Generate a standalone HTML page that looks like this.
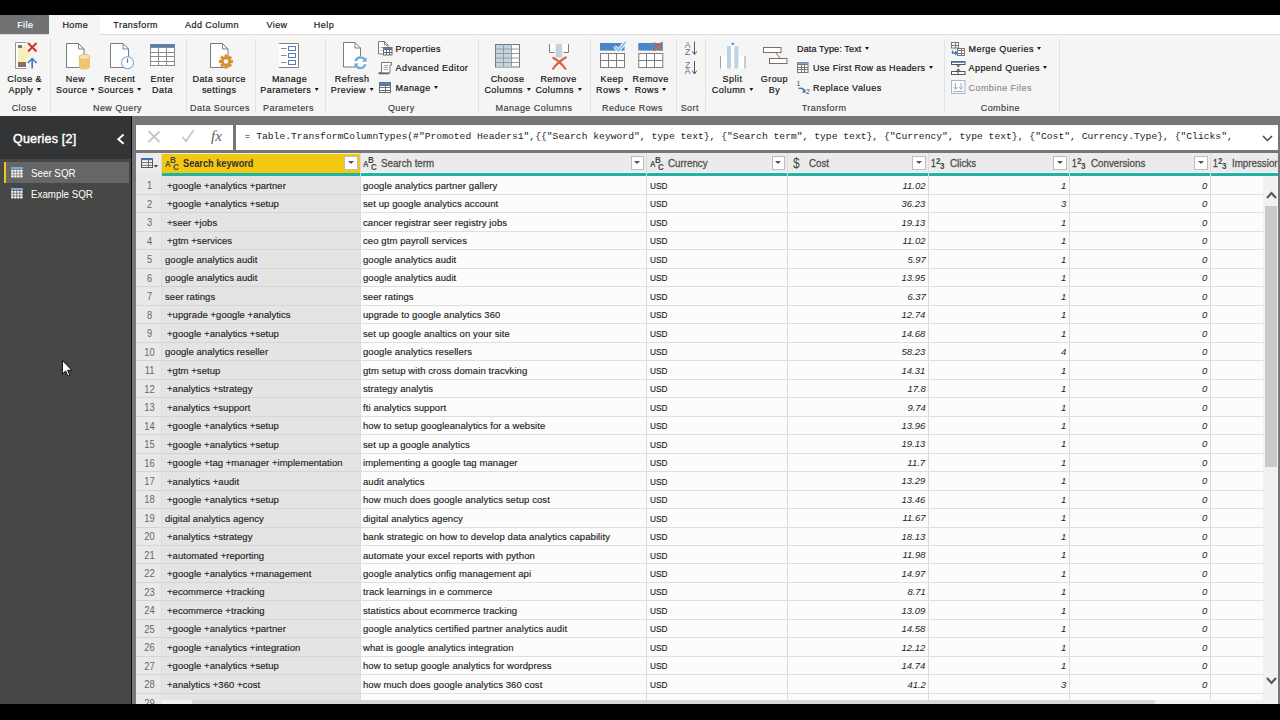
<!DOCTYPE html>
<html lang="en"><head><meta charset="utf-8"><title>Power Query Editor</title>
<style>
html,body{margin:0;padding:0;background:#000;}
body{width:1280px;height:720px;overflow:hidden;position:relative;font-family:"Liberation Sans",sans-serif;}
#app{position:absolute;left:0;top:0;width:1280px;height:720px;overflow:hidden;background:#767676;}
.abs{position:absolute;display:block;}
.t{position:absolute;white-space:pre;transform-origin:0 50%;line-height:15px;}
#topbar{position:absolute;left:0;top:0;width:1280px;height:15px;background:#000;}
#botbar{position:absolute;left:0;top:704px;width:1280px;height:16px;background:#000;}
/* left panel */
#left{position:absolute;left:0;top:116px;width:131px;height:588px;background:#474746;border-right:1px solid #0a0a0a;}
#left .t,#left .abs{margin-top:-116px;}
#lefthead{position:absolute;left:0;top:0;width:131px;height:42.5px;background:#333435;}
.qh{color:#fff;font-weight:normal;font-size:12.5px;letter-spacing:.2px;line-height:20px;-webkit-text-stroke:.45px #fff;}
.qsel{position:absolute;left:4px;top:46px;width:125px;height:21px;background:#666;}
.qbar{position:absolute;left:4px;top:46px;width:1.5px;height:21px;background:#f2c811;}
.qi{color:#fff;font-size:11.5px;line-height:16px;transform:scaleX(.85);}
/* formula */
#fx1{position:absolute;left:136px;top:125px;width:97px;height:25px;background:#fff;}
#fx2{position:absolute;left:236px;top:125px;width:1042px;height:25px;background:#fff;}
.fxi{font-family:"Liberation Serif",serif;font-style:italic;font-size:15px;color:#606060;line-height:20px;}
.formula{font-family:"Liberation Mono",monospace;font-size:9.7px;color:#222;line-height:16px;}
/* grid */
#grid{position:absolute;left:0;top:0;width:1280px;height:704px;}
#grid:before{content:"";position:absolute;left:136px;top:153px;width:1142px;height:551px;background:#fcfcfc;}
#hdr{position:absolute;left:136px;top:153px;width:1142px;height:19px;background:#ebebeb;}
#hsel{position:absolute;left:162px;top:153.8px;width:198.4px;height:18.9px;background:#f2c811;}
#teal{position:absolute;left:162px;top:172.5px;width:1116px;height:3.9px;background:#1eb3a4;}
#numcol{position:absolute;left:136px;top:172px;width:26px;height:532px;background:#e9e9e9;}
#selcol{position:absolute;left:162px;top:176px;width:198.4px;height:524px;background:#e4e4e5;}
.vl{position:absolute;top:153px;width:1px;height:547px;background:#dbdbdb;}
.hl{position:absolute;left:136px;width:1127px;height:1px;background:linear-gradient(to right,#d5d5d6 0,#d5d5d6 224px,#dfdfdf 224px,#dfdfdf 100%);}
.rn{left:137px;width:25px;text-align:center;color:#666;font-size:10.4px;transform-origin:50% 50%;transform:scaleX(.9);margin-top:.6px;}
.c{color:#1e1e1e;font-size:9.5px;letter-spacing:.05px;margin-top:.2px;-webkit-text-stroke:.15px #1e1e1e;}
.n{color:#1e1e1e;font-size:9.7px;font-style:italic;transform-origin:100% 50%;transform:scaleX(.98);}
.ty{color:#444;font-size:9px;font-weight:bold;line-height:15px;transform:scaleX(.85);}
.tys{font-size:9.5px;}
.dol{font-size:14px;line-height:18px;font-weight:normal;}
.hb{color:#333;font-weight:bold;font-size:10.5px;transform:scaleX(.875);}
.hn{color:#505050;font-size:10.5px;transform:scaleX(.93);-webkit-text-stroke:.3px #505050;margin-top:.4px;}
.dd{position:absolute;top:156.2px;width:13.5px;height:13.4px;background:#fff;border:1px solid #bdbdbd;box-sizing:border-box;}
.dd i{position:absolute;left:2.5px;top:4px;width:0;height:0;border-left:3px solid transparent;border-right:3px solid transparent;border-top:3.5px solid #555;}
#vsb{position:absolute;left:1263px;top:176px;width:15px;height:524px;background:#f1f1f1;}
#vthumb{position:absolute;left:1.5px;top:30px;width:12.5px;height:261px;background:#c9c9c9;}
#hsb{position:absolute;left:162px;top:700px;width:1116px;height:4px;background:#f1f1f1;}
#hthumb{position:absolute;left:30px;top:0;width:963px;height:4px;background:#d8d8d8;}
/* ribbon */
#tabs{position:absolute;left:0;top:15px;width:1280px;height:19px;background:#fff;border-bottom:1px solid #dadada;box-sizing:content-box;}
#tabs .t{margin-top:-15px;}
#tfile{position:absolute;left:0;top:0;width:48.7px;height:18.7px;background:#717273;}
#thome{position:absolute;left:49px;top:0;width:51px;height:20px;background:#f5f5f5;}
#ribbon{position:absolute;left:0;top:0;width:1280px;height:116px;}
#ribbon:before{content:"";position:absolute;left:0;top:35px;width:1280px;height:81px;background:#f5f5f5;}
.ct{transform:translateX(-50%);}
.tab{font-size:9px;letter-spacing:.45px;color:#1c1c1c;-webkit-text-stroke:.2px #1c1c1c;line-height:15px;}
.tw{color:#fff;-webkit-text-stroke:.2px #fff;}
.sep{position:absolute;top:39px;width:1px;height:74px;background:#e2e2e2;}
.gl{font-size:9px;letter-spacing:.45px;color:#3a3a3a;-webkit-text-stroke:.15px #3a3a3a;line-height:15px;}
.rb{font-size:9px;letter-spacing:.45px;color:#161616;-webkit-text-stroke:.2px #161616;line-height:15px;}
.sq{letter-spacing:.3px;}
.dis{color:#8a8a8a;-webkit-text-stroke:.15px #8a8a8a;}
.ar{display:inline-block;width:0;height:0;border-left:2.9px solid transparent;border-right:2.9px solid transparent;border-top:3.3px solid #1c1c1c;vertical-align:1.6px;margin-left:.6px;}
.sl{font-family:"Liberation Sans",sans-serif;font-size:8.6px;text-anchor:middle;}
.rv{font-family:"Liberation Sans",sans-serif;font-size:7px;fill:#444;}
.dt{letter-spacing:.15px;}
.usd{letter-spacing:0;transform:scaleX(.87);}
.k{letter-spacing:.05px;}
.s{letter-spacing:.09px;}
.t1{font-size:10px;font-weight:normal;-webkit-text-stroke:.3px #444;}

</style></head>
<body>
<div id="app">
<div id="tabs"><div id="tfile"></div><div id="thome"></div>
<span class="t ct tab tw" style="left:25.3px;top:17.7px">File</span><span class="t ct tab " style="left:75.3px;top:17.7px">Home</span><span class="t ct tab " style="left:135.7px;top:17.7px">Transform</span><span class="t ct tab " style="left:212px;top:17.7px">Add Column</span><span class="t ct tab " style="left:277px;top:17.7px">View</span><span class="t ct tab " style="left:324px;top:17.7px">Help</span>
</div>
<div id="ribbon">
<div class="sep" style="left:50px"></div><div class="sep" style="left:186px"></div><div class="sep" style="left:255px"></div><div class="sep" style="left:325px"></div><div class="sep" style="left:478px"></div><div class="sep" style="left:590px"></div><div class="sep" style="left:676px"></div><div class="sep" style="left:705px"></div><div class="sep" style="left:944px"></div><div class="sep" style="left:1059px"></div>
<span class="t ct gl" style="left:24.3px;top:100.5px">Close</span><span class="t ct gl" style="left:117.5px;top:100.5px">New Query</span><span class="t ct gl" style="left:220px;top:100.5px">Data Sources</span><span class="t ct gl" style="left:288.5px;top:100.5px">Parameters</span><span class="t ct gl" style="left:401.3px;top:100.5px">Query</span><span class="t ct gl" style="left:534px;top:100.5px">Manage Columns</span><span class="t ct gl" style="left:632.5px;top:100.5px">Reduce Rows</span><span class="t ct gl" style="left:689.8px;top:100.5px">Sort</span><span class="t ct gl" style="left:824px;top:100.5px">Transform</span><span class="t ct gl" style="left:1000.3px;top:100.5px">Combine</span>
<span class="t ct rb" style="left:24.7px;top:71.7px">Close &amp;</span><span class="t ct rb" style="left:24.7px;top:82.7px">Apply <i class="ar"></i></span>
<span class="t ct rb" style="left:75.5px;top:71.7px">New</span><span class="t ct rb" style="left:75.5px;top:82.7px">Source <i class="ar"></i></span>
<span class="t ct rb" style="left:119.7px;top:71.7px">Recent</span><span class="t ct rb" style="left:119.7px;top:82.7px">Sources <i class="ar"></i></span>
<span class="t ct rb" style="left:162.5px;top:71.7px">Enter</span><span class="t ct rb" style="left:162.5px;top:82.7px">Data</span>
<span class="t ct rb" style="left:219.2px;top:71.7px">Data source</span><span class="t ct rb" style="left:219.2px;top:82.7px">settings</span>
<span class="t ct rb" style="left:289.5px;top:71.7px">Manage</span><span class="t ct rb" style="left:289.5px;top:82.7px">Parameters <i class="ar"></i></span>
<span class="t ct rb" style="left:352.2px;top:71.7px">Refresh</span><span class="t ct rb" style="left:352.2px;top:82.7px">Preview <i class="ar"></i></span>
<span class="t ct rb" style="left:507.5px;top:71.7px">Choose</span><span class="t ct rb" style="left:507.5px;top:82.7px">Columns <i class="ar"></i></span>
<span class="t ct rb" style="left:558.5px;top:71.7px">Remove</span><span class="t ct rb" style="left:558.5px;top:82.7px">Columns <i class="ar"></i></span>
<span class="t ct rb" style="left:612px;top:71.7px">Keep</span><span class="t ct rb" style="left:612px;top:82.7px">Rows <i class="ar"></i></span>
<span class="t ct rb" style="left:650.6px;top:71.7px">Remove</span><span class="t ct rb" style="left:650.6px;top:82.7px">Rows <i class="ar"></i></span>
<span class="t ct rb" style="left:732.5px;top:71.7px">Split</span><span class="t ct rb" style="left:732.5px;top:82.7px">Column <i class="ar"></i></span>
<span class="t ct rb" style="left:774.4px;top:71.7px">Group</span><span class="t ct rb" style="left:774.4px;top:82.7px">By</span>
<span class="t rb " style="left:395.5px;top:42.05px">Properties</span>
<span class="t rb " style="left:395.5px;top:60.8px">Advanced Editor</span>
<span class="t rb " style="left:395.5px;top:80.8px">Manage <i class="ar"></i></span>
<span class="t rb dt" style="left:797px;top:42.05px">Data Type: Text <i class="ar"></i></span>
<span class="t rb sq" style="left:813px;top:60.8px">Use First Row as Headers <i class="ar"></i></span>
<span class="t rb " style="left:813px;top:80.8px">Replace Values</span>
<span class="t rb " style="left:968.5px;top:42.05px">Merge Queries <i class="ar"></i></span>
<span class="t rb " style="left:968.5px;top:60.8px">Append Queries <i class="ar"></i></span>
<span class="t rb dis" style="left:968.5px;top:80.8px">Combine Files</span>
<svg class="abs" style="left:14px;top:41px" width="25" height="29" viewBox="14 41 25 29"><rect x="15.5" y="42.5" width="11" height="26" fill="#fff"/><path d="M26.5 42.5H15.5v26h11" fill="none" stroke="#8d9baa"/><path d="M18 45.5h8.3v6.5l6.4 2.6l-6.4 3.6v4H18z" fill="#f6f0b6"/><rect x="18" y="45" width="4" height="3" fill="#8a6f60"/><rect x="18" y="62" width="8" height="5" fill="#8a6f60"/><path d="M28 43l8.5 8.5M36.5 43l-8.5 8.5" stroke="#cf3431" stroke-width="2.1" fill="none"/><path d="M32.2 68.5V59M27.8 63L32.2 58.6l4.4 4.4" stroke="#447db8" stroke-width="1.7" fill="none"/></svg>
<svg class="abs" style="left:64px;top:41px" width="28" height="30" viewBox="64 41 28 30"><path d="M66.5 43.5h12.0l5.5 5.5v18.5h-17.5z" fill="#fff" stroke="#7c7c7c"/><path d="M78.5 43.5v5.5h5.5" fill="none" stroke="#7c7c7c"/><path d="M79 57v10c0 3.4 11 3.4 11 0V57z" fill="#ecc674"/><ellipse cx="84.5" cy="57" rx="5.5" ry="2.6" fill="#f7e2ad" stroke="#e3b559" stroke-width=".8"/></svg>
<svg class="abs" style="left:108px;top:41px" width="28" height="30" viewBox="108 41 28 30"><path d="M110.5 43.5h12.5l5.5 5.5v18.5h-18z" fill="#fff" stroke="#7c7c7c"/><path d="M123.0 43.5v5.5h5.5" fill="none" stroke="#7c7c7c"/><circle cx="127.5" cy="62.7" r="6" fill="#fff" stroke="#7aabda" stroke-width="1.1"/><path d="M127.5 58.5v4.5" stroke="#777" stroke-width="1.1" fill="none"/></svg>
<svg class="abs" style="left:149px;top:43px" width="28" height="24" viewBox="149 43 28 24"><rect x="150.5" y="44.5" width="24" height="21" fill="#fff" stroke="#8a8a8a"/><rect x="150.5" y="44.5" width="24" height="3.2" fill="#4a80bd"/><path d="M158.5 47.7v17.8M166.5 47.7v17.8M150.5 47.5h24M150.5 52.5h24M150.5 56.5h24M150.5 61.5h24" stroke="#8a8a8a" fill="none"/></svg>
<svg class="abs" style="left:208px;top:41px" width="28" height="30" viewBox="208 41 28 30"><path d="M210.5 43.5h12.0l5.5 5.5v18.5h-17.5z" fill="#fff" stroke="#7c7c7c"/><path d="M222.5 43.5v5.5h5.5" fill="none" stroke="#7c7c7c"/><rect x="224.4" y="54.5" width="3.2" height="14" fill="#d98f32" transform="rotate(0 226 61.5)"/><rect x="224.4" y="54.5" width="3.2" height="14" fill="#d98f32" transform="rotate(45 226 61.5)"/><rect x="224.4" y="54.5" width="3.2" height="14" fill="#d98f32" transform="rotate(90 226 61.5)"/><rect x="224.4" y="54.5" width="3.2" height="14" fill="#d98f32" transform="rotate(135 226 61.5)"/><circle cx="226" cy="61.5" r="4.8" fill="#d98f32"/><circle cx="226" cy="61.5" r="2.2" fill="#fff"/></svg>
<svg class="abs" style="left:277px;top:41px" width="24" height="29" viewBox="277 41 24 29"><path d="M279 43.5h19.5v24H279" fill="#fff" stroke="#8c7d74"/><path d="M281 48.5h5.5" stroke="#8a8a8a" fill="none"/><rect x="288.5" y="46.5" width="7" height="4" fill="#fff" stroke="#4f81bd"/><path d="M281 55.5h5.5" stroke="#8a8a8a" fill="none"/><rect x="288.5" y="53.5" width="7" height="4" fill="#fff" stroke="#4f81bd"/><path d="M281 62.5h5.5" stroke="#8a8a8a" fill="none"/><rect x="288.5" y="60.5" width="7" height="4" fill="#fff" stroke="#4f81bd"/></svg>
<svg class="abs" style="left:341px;top:40px" width="29" height="31" viewBox="341 40 29 31"><path d="M343.5 42.5h11.5l5.5 5.5v19.0h-17z" fill="#fff" stroke="#7c7c7c"/><path d="M355.0 42.5v5.5h5.5" fill="none" stroke="#7c7c7c"/><circle cx="360.5" cy="62.7" r="6.8" fill="#fff"/><path d="M355.6 61.2a5.2 5.2 0 0 1 9.3-1.6" fill="none" stroke="#6aaad9" stroke-width="2.2"/><path d="M366.6 57.2v4.6h-4.6z" fill="#6aaad9"/><path d="M365.4 64.2a5.2 5.2 0 0 1-9.3 1.6" fill="none" stroke="#6aaad9" stroke-width="2.2"/><path d="M354.4 68.2v-4.6h4.6z" fill="#6aaad9"/></svg>
<svg class="abs" style="left:377px;top:40px" width="17" height="17" viewBox="377 40 17 17"><path d="M378.5 41.5h6l3.5 3.5v9h-9.5z" fill="#fff" stroke="#7c7c7c"/><path d="M384.5 41.5v3.5h3.5" fill="none" stroke="#7c7c7c"/><path d="M380.5 47.5h3M380.5 50.5h2" stroke="#9ab" fill="none"/><rect x="383.5" y="47.5" width="8.5" height="7.5" fill="#fff" stroke="#6a6a6a"/><rect x="383.5" y="47.5" width="8.5" height="2.4" fill="#4a80bd"/><path d="M386.5 49.9v5.1M389.5 49.9v5.1M383.5 49.5h8.5M383.5 52.5h8.5" stroke="#6a6a6a" fill="none"/></svg>
<svg class="abs" style="left:377px;top:61px" width="17" height="15" viewBox="377 61 17 15"><path d="M381.5 62.5h10v2.5h-1.5v8h-10.5v-0.5h2z" fill="#fff" stroke="#777"/><path d="M378.5 73.5h10.5" stroke="#666" stroke-width="1.6" fill="none"/><path d="M383.5 65.5h4.5M383.5 67.5h4.5M383.5 69.5h4.5" stroke="#888" stroke-width=".8" fill="none"/></svg>
<svg class="abs" style="left:378px;top:81px" width="14" height="13" viewBox="378 81 14 13"><rect x="379.5" y="82.5" width="11" height="10" fill="#fff" stroke="#6e6e6e"/><rect x="379.5" y="82.5" width="11" height="2.5" fill="#4a80bd"/><path d="M385.5 85.0v7.5M379.5 85.5h11M379.5 87.5h11M379.5 90.5h11" stroke="#6e6e6e" fill="none"/></svg>
<svg class="abs" style="left:494px;top:43px" width="28" height="26" viewBox="494 43 28 26"><rect x="495.5" y="44.5" width="24" height="22.5" fill="#fff" stroke="#777"/><rect x="496" y="45" width="16" height="21.5" fill="#c2d5e2"/><path d="M503.5 44.5v22.5M511.5 44.5v22.5M495.5 49.0h24M495.5 53.5h24M495.5 58.0h24M495.5 62.5h24" stroke="#9a9a9a" fill="none"/></svg>
<svg class="abs" style="left:547px;top:43px" width="24" height="29" viewBox="547 43 24 29"><rect x="549.5" y="44" width="19" height="8.5" fill="#fff"/><path d="M549.5 44v8.5h5M568.5 44v8.5h-5" fill="none" stroke="#7d7d7d"/><rect x="555.6" y="44" width="6.6" height="13.5" fill="#c2d4df"/><path d="M552.5 57.5c5 2.5 9.5 6.5 13.5 12M566.5 57c-5.5 3-10.5 7.5-14 12.5" stroke="#d9623c" stroke-width="2" fill="none"/></svg>
<svg class="abs" style="left:599px;top:40px" width="29" height="29" viewBox="599 40 29 29"><rect x="600" y="43" width="24.5" height="7.6" fill="#4a86c8"/><rect x="600.5" y="53.5" width="24" height="14" fill="#fff" stroke="#7d7d7d"/><path d="M608.5 53.5v14M616.5 53.5v14M600.5 60.5h24" stroke="#7d7d7d" fill="none"/><path d="M614.5 46.5l4 4l7-8.5" stroke="#fff" stroke-width="3.6" fill="none"/><path d="M614.5 46.5l4 4l7-8.5" stroke="#8fbbdf" stroke-width="1.9" fill="none"/></svg>
<svg class="abs" style="left:637px;top:40px" width="29" height="29" viewBox="637 40 29 29"><rect x="638.3" y="43" width="24.5" height="7.6" fill="#4a86c8"/><rect x="638.8" y="53.5" width="24" height="14" fill="#fff" stroke="#7d7d7d"/><path d="M646.5 53.5v14M654.5 53.5v14M638.8 60.5h24" stroke="#7d7d7d" fill="none"/><path d="M654 42.5l8.5 8M662.5 42l-8.5 9" stroke="#d9623c" stroke-width="1.7" fill="none"/></svg>
<svg class="abs" style="left:683px;top:40px" width="17" height="36" viewBox="683 40 17 36"><text x="687.6" y="48" class="sl" fill="#4a7ebb">A</text><text x="687.6" y="54.9" class="sl" fill="#6f6390">Z</text><path d="M694.5 41.5v13M692.2 51.2l2.3 3.3l2.3-3.3" stroke="#5a5a5a" stroke-width="1" fill="none"/><text x="687.6" y="67.5" class="sl" fill="#4a7ebb">Z</text><text x="687.6" y="74.4" class="sl" fill="#6f6390">A</text><path d="M694.5 61.0v13M692.2 70.7l2.3 3.3l2.3-3.3" stroke="#5a5a5a" stroke-width="1" fill="none"/></svg>
<svg class="abs" style="left:718px;top:41px" width="30" height="29" viewBox="718 41 30 29"><rect x="720.5" y="56" width="24.5" height="12.5" fill="#fff"/><path d="M720.5 56v12.5M745 56v12.5" stroke="#a0a0a0" fill="none"/><rect x="727" y="46" width="11.4" height="22.5" fill="#fff"/><rect x="727" y="46" width="4" height="22.5" fill="#b9d4e6"/><rect x="734.4" y="46" width="4" height="22.5" fill="#b9d4e6"/><path d="M731 43h3.6l-1.8 2.4z" fill="#4a86c8"/></svg>
<svg class="abs" style="left:761px;top:45px" width="29" height="21" viewBox="761 45 29 21"><path d="M775.5 52.5l5 6" stroke="#7d6f66" fill="none"/><rect x="763.5" y="47.5" width="17.5" height="5" fill="#fff" stroke="#7d6f66"/><rect x="769.5" y="58.5" width="17.5" height="5" fill="#fff" stroke="#7d6f66"/></svg>
<svg class="abs" style="left:796px;top:61px" width="14" height="13" viewBox="796 61 14 13"><rect x="797.5" y="62.5" width="10.5" height="10" fill="#fff" stroke="#777"/><rect x="797.5" y="62.5" width="10.5" height="2.2" fill="#7aa7d6"/><path d="M801.5 64.7v7.8M804.5 64.7v7.8M797.5 64.5h10.5M797.5 67.5h10.5M797.5 69.5h10.5" stroke="#777" fill="none"/></svg>
<svg class="abs" style="left:796px;top:79px" width="16" height="16" viewBox="796 79 16 16"><text x="796.5" y="85.8" class="rv">1</text><text x="806" y="94" class="rv">2</text><path d="M798.5 88.5c2.5-.6 5 .2 6 2.4" stroke="#3f78b5" stroke-width="1.5" fill="none"/><path d="M802 92.8l4-.4l-1.3-3.6z" fill="#3f78b5"/></svg>
<svg class="abs" style="left:950px;top:41px" width="17" height="16" viewBox="950 41 17 16"><rect x="951.5" y="42.5" width="7" height="5.5" fill="#fff" stroke="#777"/><path d="M955.5 42.5v5.5M951.5 45.5h7" stroke="#777" fill="none"/><rect x="957.5" y="48.5" width="7" height="7" fill="#fff" stroke="#777"/><path d="M961.5 48.5v7M957.5 50.5h7M957.5 53.5h7" stroke="#777" fill="none"/><path d="M952.5 50.5v2.5h3.5" stroke="#3f78b5" stroke-width="1.3" fill="none"/><path d="M955 50.6l3 2.5l-3 2.5z" fill="#3f78b5"/></svg>
<svg class="abs" style="left:950px;top:60px" width="17" height="16" viewBox="950 60 17 16"><rect x="951.5" y="61.5" width="13.5" height="3" fill="#fff" stroke="#555"/><rect x="951.5" y="61.5" width="13.5" height="1.4" fill="#4a86c8"/><rect x="951.5" y="71.5" width="13.5" height="3" fill="#fff" stroke="#555"/><path d="M958 71.5v3" stroke="#555"/><path d="M956 65.2h4.6l-2.3 2.2z" fill="#3f78b5"/><path d="M956 70.8h4.6l-2.3-2.2z" fill="#555"/></svg>
<svg class="abs" style="left:950px;top:79px" width="17" height="16" viewBox="950 79 17 16"><rect x="951.5" y="80.5" width="13.5" height="13" fill="#fbfbfb" stroke="#a9b7c6"/><path d="M955.5 83v6M961 83v6M953.8 87l1.7 2.4l1.7-2.4M959.3 87l1.7 2.4l1.7-2.4M953.5 91.5h10" stroke="#a0b0c0" stroke-width="1" fill="none"/></svg>
</div>
<div id="left">
 <div id="lefthead"><span class="t qh" style="left:13px;top:129px">Queries [2]</span>
  <svg class="abs" style="left:115px;top:132px" width="12" height="14" viewBox="115 132 12 14"><path d="M123.6 134.6 L118.4 139.2 L123.6 143.8" fill="none" stroke="#fff" stroke-width="2"/></svg>
 </div>
 <div class="qsel"></div><div class="qbar"></div>
 <svg class="abs" style="left:11px;top:167px" width="12" height="11" viewBox="0 0 12 11"><rect x="0" y="0" width="12" height="2" fill="#7aa6d8"/><rect x="0.2" y="2.7" width="2.3" height="2.1" fill="#fff"/><rect x="3.2" y="2.7" width="2.3" height="2.1" fill="#fff"/><rect x="6.2" y="2.7" width="2.3" height="2.1" fill="#fff"/><rect x="9.2" y="2.7" width="2.3" height="2.1" fill="#fff"/><rect x="0.2" y="5.5" width="2.3" height="2.1" fill="#fff"/><rect x="3.2" y="5.5" width="2.3" height="2.1" fill="#fff"/><rect x="6.2" y="5.5" width="2.3" height="2.1" fill="#fff"/><rect x="9.2" y="5.5" width="2.3" height="2.1" fill="#fff"/><rect x="0.2" y="8.3" width="2.3" height="2.1" fill="#fff"/><rect x="3.2" y="8.3" width="2.3" height="2.1" fill="#fff"/><rect x="6.2" y="8.3" width="2.3" height="2.1" fill="#fff"/><rect x="9.2" y="8.3" width="2.3" height="2.1" fill="#fff"/></svg>
 <span class="t qi" style="left:31px;top:165px">Seer SQR</span>
 <svg class="abs" style="left:11px;top:188px" width="12" height="11" viewBox="0 0 12 11"><rect x="0" y="0" width="12" height="2" fill="#7aa6d8"/><rect x="0.2" y="2.7" width="2.3" height="2.1" fill="#fff"/><rect x="3.2" y="2.7" width="2.3" height="2.1" fill="#fff"/><rect x="6.2" y="2.7" width="2.3" height="2.1" fill="#fff"/><rect x="9.2" y="2.7" width="2.3" height="2.1" fill="#fff"/><rect x="0.2" y="5.5" width="2.3" height="2.1" fill="#fff"/><rect x="3.2" y="5.5" width="2.3" height="2.1" fill="#fff"/><rect x="6.2" y="5.5" width="2.3" height="2.1" fill="#fff"/><rect x="9.2" y="5.5" width="2.3" height="2.1" fill="#fff"/><rect x="0.2" y="8.3" width="2.3" height="2.1" fill="#fff"/><rect x="3.2" y="8.3" width="2.3" height="2.1" fill="#fff"/><rect x="6.2" y="8.3" width="2.3" height="2.1" fill="#fff"/><rect x="9.2" y="8.3" width="2.3" height="2.1" fill="#fff"/></svg>
 <span class="t qi" style="left:31px;top:186px">Example SQR</span>
</div>
<div id="fx1">
 <svg class="abs" style="left:11px;top:5px" width="14" height="13" viewBox="0 0 14 13"><path d="M1.5 1 L12.5 12 M12.5 1.5 L1.5 12" stroke="#c6c6c6" stroke-width="1.8" fill="none"/></svg>
 <svg class="abs" style="left:45px;top:4px" width="14" height="14" viewBox="0 0 14 14"><path d="M1.5 8 L5 12.3 L12.5 1.2" stroke="#c6c6c6" stroke-width="1.8" fill="none"/></svg>
 <span class="t fxi" style="left:75px;top:1px">fx</span>
</div>
<div id="fx2"><span class="t formula" style="left:8.5px;top:4px">= Table.TransformColumnTypes(#"Promoted Headers1",{{"Search keyword", type text}, {"Search term", type text}, {"Currency", type text}, {"Cost", Currency.Type}, {"Clicks",</span>
 <svg class="abs" style="left:1026px;top:9.5px" width="11" height="7" viewBox="0 0 11 7"><path d="M1 1 L5.5 5.5 L10 1" stroke="#444" stroke-width="1.5" fill="none"/></svg>
</div>
<div id="grid">
<div id="hdr"></div><div id="hsel"></div><div id="teal"></div>
<div id="numcol"></div><div id="selcol"></div>
<svg class="abs" style="left:140px;top:157px" width="20" height="13" viewBox="140 157 20 13"><rect x="141.5" y="158.5" width="11" height="9" fill="#fff" stroke="#555"/><rect x="141" y="158" width="12" height="2.2" fill="#3f74b1"/><path d="M141.5 162.6h11M141.5 165.3h11M148.5 160v7.5" stroke="#666" fill="none"/><path d="M153.6 165h4.6l-2.3 2.4z" fill="#444"/></svg>
<span class="t ty" style="left:164.5px;top:157px">A</span><span class="t ty tys" style="left:170px;top:152px">B</span><span class="t ty tys" style="left:172.7px;top:158.6px">C</span><span class="t hb" style="left:183px;top:156px">Search keyword</span><div class="dd" style="left:344.4px"><i></i></div>
<span class="t ty" style="left:362.5px;top:157px">A</span><span class="t ty tys" style="left:368px;top:152px">B</span><span class="t ty tys" style="left:370.7px;top:158.6px">C</span><span class="t hn" style="left:381px;top:156px">Search term</span><div class="dd" style="left:630.5px"><i></i></div>
<span class="t ty" style="left:649.5px;top:157px">A</span><span class="t ty tys" style="left:655px;top:152px">B</span><span class="t ty tys" style="left:657.7px;top:158.6px">C</span><span class="t hn" style="left:668px;top:156px">Currency</span><div class="dd" style="left:771.5px"><i></i></div>
<span class="t ty dol" style="left:793.3px;top:154.3px">$</span><span class="t hn" style="left:809px;top:156px">Cost</span><div class="dd" style="left:912.4px"><i></i></div>
<span class="t ty t1" style="left:931.4px;top:156.3px">1</span><span class="t ty tys" style="left:936.0px;top:152.6px">2</span><span class="t ty tys" style="left:940.1px;top:158px">3</span><span class="t hn" style="left:950px;top:156px">Clicks</span><div class="dd" style="left:1053.3px"><i></i></div>
<span class="t ty t1" style="left:1072.4px;top:156.3px">1</span><span class="t ty tys" style="left:1077.0px;top:152.6px">2</span><span class="t ty tys" style="left:1081.1px;top:158px">3</span><span class="t hn" style="left:1091px;top:156px">Conversions</span><div class="dd" style="left:1194.2px"><i></i></div>
<span class="t ty t1" style="left:1213.4px;top:156.3px">1</span><span class="t ty tys" style="left:1218.0px;top:152.6px">2</span><span class="t ty tys" style="left:1222.1px;top:158px">3</span><span class="t hn" style="left:1232px;top:156px;width:48.5px;overflow:hidden">Impressions</span>
<div class="vl" style="left:161px"></div><div class="vl" style="left:359.9px"></div><div class="vl" style="left:646.1px"></div><div class="vl" style="left:787.0px"></div><div class="vl" style="left:927.9px"></div><div class="vl" style="left:1068.8px"></div><div class="vl" style="left:1209.7px"></div>
<div class="hl" style="top:193.88px"></div><span class="t rn" style="top:177.74px">1</span><span class="t c k" style="left:167px;top:177.74px">+google +analytics +partner</span><span class="t c s" style="left:363px;top:177.74px">google analytics partner gallery</span><span class="t c usd" style="left:650px;top:177.74px">USD</span><span class="t n" style="right:354.5px;top:177.74px">11.02</span><span class="t n" style="right:213.5px;top:177.74px">1</span><span class="t n" style="right:72.5px;top:177.74px">0</span>
<div class="hl" style="top:212.36px"></div><span class="t rn" style="top:196.22px">2</span><span class="t c k" style="left:167px;top:196.22px">+google +analytics +setup</span><span class="t c s" style="left:363px;top:196.22px">set up google analytics account</span><span class="t c usd" style="left:650px;top:196.22px">USD</span><span class="t n" style="right:354.5px;top:196.22px">36.23</span><span class="t n" style="right:213.5px;top:196.22px">3</span><span class="t n" style="right:72.5px;top:196.22px">0</span>
<div class="hl" style="top:230.84px"></div><span class="t rn" style="top:214.7px">3</span><span class="t c k" style="left:167px;top:214.7px">+seer +jobs</span><span class="t c s" style="left:363px;top:214.7px">cancer registrar seer registry jobs</span><span class="t c usd" style="left:650px;top:214.7px">USD</span><span class="t n" style="right:354.5px;top:214.7px">19.13</span><span class="t n" style="right:213.5px;top:214.7px">1</span><span class="t n" style="right:72.5px;top:214.7px">0</span>
<div class="hl" style="top:249.32px"></div><span class="t rn" style="top:233.18px">4</span><span class="t c k" style="left:167px;top:233.18px">+gtm +services</span><span class="t c s" style="left:363px;top:233.18px">ceo gtm payroll services</span><span class="t c usd" style="left:650px;top:233.18px">USD</span><span class="t n" style="right:354.5px;top:233.18px">11.02</span><span class="t n" style="right:213.5px;top:233.18px">1</span><span class="t n" style="right:72.5px;top:233.18px">0</span>
<div class="hl" style="top:267.8px"></div><span class="t rn" style="top:251.66px">5</span><span class="t c k" style="left:165px;top:251.66px">google analytics audit</span><span class="t c s" style="left:363px;top:251.66px">google analytics audit</span><span class="t c usd" style="left:650px;top:251.66px">USD</span><span class="t n" style="right:354.5px;top:251.66px">5.97</span><span class="t n" style="right:213.5px;top:251.66px">1</span><span class="t n" style="right:72.5px;top:251.66px">0</span>
<div class="hl" style="top:286.28px"></div><span class="t rn" style="top:270.14px">6</span><span class="t c k" style="left:165px;top:270.14px">google analytics audit</span><span class="t c s" style="left:363px;top:270.14px">google analytics audit</span><span class="t c usd" style="left:650px;top:270.14px">USD</span><span class="t n" style="right:354.5px;top:270.14px">13.95</span><span class="t n" style="right:213.5px;top:270.14px">1</span><span class="t n" style="right:72.5px;top:270.14px">0</span>
<div class="hl" style="top:304.76px"></div><span class="t rn" style="top:288.62px">7</span><span class="t c k" style="left:165px;top:288.62px">seer ratings</span><span class="t c s" style="left:363px;top:288.62px">seer ratings</span><span class="t c usd" style="left:650px;top:288.62px">USD</span><span class="t n" style="right:354.5px;top:288.62px">6.37</span><span class="t n" style="right:213.5px;top:288.62px">1</span><span class="t n" style="right:72.5px;top:288.62px">0</span>
<div class="hl" style="top:323.24px"></div><span class="t rn" style="top:307.1px">8</span><span class="t c k" style="left:167px;top:307.1px">+upgrade +google +analytics</span><span class="t c s" style="left:363px;top:307.1px">upgrade to google analytics 360</span><span class="t c usd" style="left:650px;top:307.1px">USD</span><span class="t n" style="right:354.5px;top:307.1px">12.74</span><span class="t n" style="right:213.5px;top:307.1px">1</span><span class="t n" style="right:72.5px;top:307.1px">0</span>
<div class="hl" style="top:341.72px"></div><span class="t rn" style="top:325.58px">9</span><span class="t c k" style="left:167px;top:325.58px">+google +analytics +setup</span><span class="t c s" style="left:363px;top:325.58px">set up google analtics on your site</span><span class="t c usd" style="left:650px;top:325.58px">USD</span><span class="t n" style="right:354.5px;top:325.58px">14.68</span><span class="t n" style="right:213.5px;top:325.58px">1</span><span class="t n" style="right:72.5px;top:325.58px">0</span>
<div class="hl" style="top:360.2px"></div><span class="t rn" style="top:344.06px">10</span><span class="t c k" style="left:165px;top:344.06px">google analytics reseller</span><span class="t c s" style="left:363px;top:344.06px">google analytics resellers</span><span class="t c usd" style="left:650px;top:344.06px">USD</span><span class="t n" style="right:354.5px;top:344.06px">58.23</span><span class="t n" style="right:213.5px;top:344.06px">4</span><span class="t n" style="right:72.5px;top:344.06px">0</span>
<div class="hl" style="top:378.68px"></div><span class="t rn" style="top:362.54px">11</span><span class="t c k" style="left:167px;top:362.54px">+gtm +setup</span><span class="t c s" style="left:363px;top:362.54px">gtm setup with cross domain tracvking</span><span class="t c usd" style="left:650px;top:362.54px">USD</span><span class="t n" style="right:354.5px;top:362.54px">14.31</span><span class="t n" style="right:213.5px;top:362.54px">1</span><span class="t n" style="right:72.5px;top:362.54px">0</span>
<div class="hl" style="top:397.16px"></div><span class="t rn" style="top:381.02px">12</span><span class="t c k" style="left:167px;top:381.02px">+analytics +strategy</span><span class="t c s" style="left:363px;top:381.02px">strategy analytis</span><span class="t c usd" style="left:650px;top:381.02px">USD</span><span class="t n" style="right:354.5px;top:381.02px">17.8</span><span class="t n" style="right:213.5px;top:381.02px">1</span><span class="t n" style="right:72.5px;top:381.02px">0</span>
<div class="hl" style="top:415.64px"></div><span class="t rn" style="top:399.5px">13</span><span class="t c k" style="left:167px;top:399.5px">+analytics +support</span><span class="t c s" style="left:363px;top:399.5px">fti analytics support</span><span class="t c usd" style="left:650px;top:399.5px">USD</span><span class="t n" style="right:354.5px;top:399.5px">9.74</span><span class="t n" style="right:213.5px;top:399.5px">1</span><span class="t n" style="right:72.5px;top:399.5px">0</span>
<div class="hl" style="top:434.12px"></div><span class="t rn" style="top:417.98px">14</span><span class="t c k" style="left:167px;top:417.98px">+google +analytics +setup</span><span class="t c s" style="left:363px;top:417.98px">how to setup googleanalytics for a website</span><span class="t c usd" style="left:650px;top:417.98px">USD</span><span class="t n" style="right:354.5px;top:417.98px">13.96</span><span class="t n" style="right:213.5px;top:417.98px">1</span><span class="t n" style="right:72.5px;top:417.98px">0</span>
<div class="hl" style="top:452.6px"></div><span class="t rn" style="top:436.46px">15</span><span class="t c k" style="left:167px;top:436.46px">+google +analytics +setup</span><span class="t c s" style="left:363px;top:436.46px">set up a google analytics</span><span class="t c usd" style="left:650px;top:436.46px">USD</span><span class="t n" style="right:354.5px;top:436.46px">19.13</span><span class="t n" style="right:213.5px;top:436.46px">1</span><span class="t n" style="right:72.5px;top:436.46px">0</span>
<div class="hl" style="top:471.08px"></div><span class="t rn" style="top:454.94px">16</span><span class="t c k" style="left:167px;top:454.94px">+google +tag +manager +implementation</span><span class="t c s" style="left:363px;top:454.94px">implementing a google tag manager</span><span class="t c usd" style="left:650px;top:454.94px">USD</span><span class="t n" style="right:354.5px;top:454.94px">11.7</span><span class="t n" style="right:213.5px;top:454.94px">1</span><span class="t n" style="right:72.5px;top:454.94px">0</span>
<div class="hl" style="top:489.56px"></div><span class="t rn" style="top:473.42px">17</span><span class="t c k" style="left:167px;top:473.42px">+analytics +audit</span><span class="t c s" style="left:363px;top:473.42px">audit analytics</span><span class="t c usd" style="left:650px;top:473.42px">USD</span><span class="t n" style="right:354.5px;top:473.42px">13.29</span><span class="t n" style="right:213.5px;top:473.42px">1</span><span class="t n" style="right:72.5px;top:473.42px">0</span>
<div class="hl" style="top:508.04px"></div><span class="t rn" style="top:491.9px">18</span><span class="t c k" style="left:167px;top:491.9px">+google +analytics +setup</span><span class="t c s" style="left:363px;top:491.9px">how much does google analytics setup cost</span><span class="t c usd" style="left:650px;top:491.9px">USD</span><span class="t n" style="right:354.5px;top:491.9px">13.46</span><span class="t n" style="right:213.5px;top:491.9px">1</span><span class="t n" style="right:72.5px;top:491.9px">0</span>
<div class="hl" style="top:526.52px"></div><span class="t rn" style="top:510.38px">19</span><span class="t c k" style="left:165px;top:510.38px">digital analytics agency</span><span class="t c s" style="left:363px;top:510.38px">digital analytics agency</span><span class="t c usd" style="left:650px;top:510.38px">USD</span><span class="t n" style="right:354.5px;top:510.38px">11.67</span><span class="t n" style="right:213.5px;top:510.38px">1</span><span class="t n" style="right:72.5px;top:510.38px">0</span>
<div class="hl" style="top:545.0px"></div><span class="t rn" style="top:528.86px">20</span><span class="t c k" style="left:167px;top:528.86px">+analytics +strategy</span><span class="t c s" style="left:363px;top:528.86px">bank strategic on how to develop data analytics capability</span><span class="t c usd" style="left:650px;top:528.86px">USD</span><span class="t n" style="right:354.5px;top:528.86px">18.13</span><span class="t n" style="right:213.5px;top:528.86px">1</span><span class="t n" style="right:72.5px;top:528.86px">0</span>
<div class="hl" style="top:563.48px"></div><span class="t rn" style="top:547.34px">21</span><span class="t c k" style="left:167px;top:547.34px">+automated +reporting</span><span class="t c s" style="left:363px;top:547.34px">automate your excel reports with python</span><span class="t c usd" style="left:650px;top:547.34px">USD</span><span class="t n" style="right:354.5px;top:547.34px">11.98</span><span class="t n" style="right:213.5px;top:547.34px">1</span><span class="t n" style="right:72.5px;top:547.34px">0</span>
<div class="hl" style="top:581.96px"></div><span class="t rn" style="top:565.82px">22</span><span class="t c k" style="left:167px;top:565.82px">+google +analytics +management</span><span class="t c s" style="left:363px;top:565.82px">google analytics onfig management api</span><span class="t c usd" style="left:650px;top:565.82px">USD</span><span class="t n" style="right:354.5px;top:565.82px">14.97</span><span class="t n" style="right:213.5px;top:565.82px">1</span><span class="t n" style="right:72.5px;top:565.82px">0</span>
<div class="hl" style="top:600.44px"></div><span class="t rn" style="top:584.3px">23</span><span class="t c k" style="left:167px;top:584.3px">+ecommerce +tracking</span><span class="t c s" style="left:363px;top:584.3px">track learnings in e commerce</span><span class="t c usd" style="left:650px;top:584.3px">USD</span><span class="t n" style="right:354.5px;top:584.3px">8.71</span><span class="t n" style="right:213.5px;top:584.3px">1</span><span class="t n" style="right:72.5px;top:584.3px">0</span>
<div class="hl" style="top:618.92px"></div><span class="t rn" style="top:602.78px">24</span><span class="t c k" style="left:167px;top:602.78px">+ecommerce +tracking</span><span class="t c s" style="left:363px;top:602.78px">statistics about ecommerce tracking</span><span class="t c usd" style="left:650px;top:602.78px">USD</span><span class="t n" style="right:354.5px;top:602.78px">13.09</span><span class="t n" style="right:213.5px;top:602.78px">1</span><span class="t n" style="right:72.5px;top:602.78px">0</span>
<div class="hl" style="top:637.4px"></div><span class="t rn" style="top:621.26px">25</span><span class="t c k" style="left:167px;top:621.26px">+google +analytics +partner</span><span class="t c s" style="left:363px;top:621.26px">google analytics certified partner analytics audit</span><span class="t c usd" style="left:650px;top:621.26px">USD</span><span class="t n" style="right:354.5px;top:621.26px">14.58</span><span class="t n" style="right:213.5px;top:621.26px">1</span><span class="t n" style="right:72.5px;top:621.26px">0</span>
<div class="hl" style="top:655.88px"></div><span class="t rn" style="top:639.74px">26</span><span class="t c k" style="left:167px;top:639.74px">+google +analytics +integration</span><span class="t c s" style="left:363px;top:639.74px">what is google analytics integration</span><span class="t c usd" style="left:650px;top:639.74px">USD</span><span class="t n" style="right:354.5px;top:639.74px">12.12</span><span class="t n" style="right:213.5px;top:639.74px">1</span><span class="t n" style="right:72.5px;top:639.74px">0</span>
<div class="hl" style="top:674.36px"></div><span class="t rn" style="top:658.22px">27</span><span class="t c k" style="left:167px;top:658.22px">+google +analytics +setup</span><span class="t c s" style="left:363px;top:658.22px">how to setup google analytics for wordpress</span><span class="t c usd" style="left:650px;top:658.22px">USD</span><span class="t n" style="right:354.5px;top:658.22px">14.74</span><span class="t n" style="right:213.5px;top:658.22px">1</span><span class="t n" style="right:72.5px;top:658.22px">0</span>
<div class="hl" style="top:692.84px"></div><span class="t rn" style="top:676.7px">28</span><span class="t c k" style="left:167px;top:676.7px">+analytics +360 +cost</span><span class="t c s" style="left:363px;top:676.7px">how much does google analytics 360 cost</span><span class="t c usd" style="left:650px;top:676.7px">USD</span><span class="t n" style="right:354.5px;top:676.7px">41.2</span><span class="t n" style="right:213.5px;top:676.7px">3</span><span class="t n" style="right:72.5px;top:676.7px">0</span>
<span class="t rn" style="top:695.18px">29</span>
<div id="vsb"><div id="vthumb"></div>
 <svg class="abs" style="left:3px;top:15px" width="11" height="8" viewBox="0 0 11 8"><path d="M1 7 L5.5 2 L10 7" stroke="#555" stroke-width="2" fill="none"/></svg>
 <svg class="abs" style="left:3px;top:501px" width="11" height="8" viewBox="0 0 11 8"><path d="M1 1 L5.5 6 L10 1" stroke="#555" stroke-width="2" fill="none"/></svg>
</div>
<div id="hsb"><div id="hthumb"></div></div>
</div>
<svg class="abs" style="left:60px;top:358px" width="14" height="21" viewBox="60 358 14 21"><path d="M62.4 360.4v13.6l3.2-3l2.3 5.2l2-.9l-2.3-5h4.2z" fill="#fff" stroke="#0a0a0a" stroke-width="1" stroke-linejoin="round"/></svg>
<div id="topbar"></div><div id="botbar"></div>
</div>
</body></html>
